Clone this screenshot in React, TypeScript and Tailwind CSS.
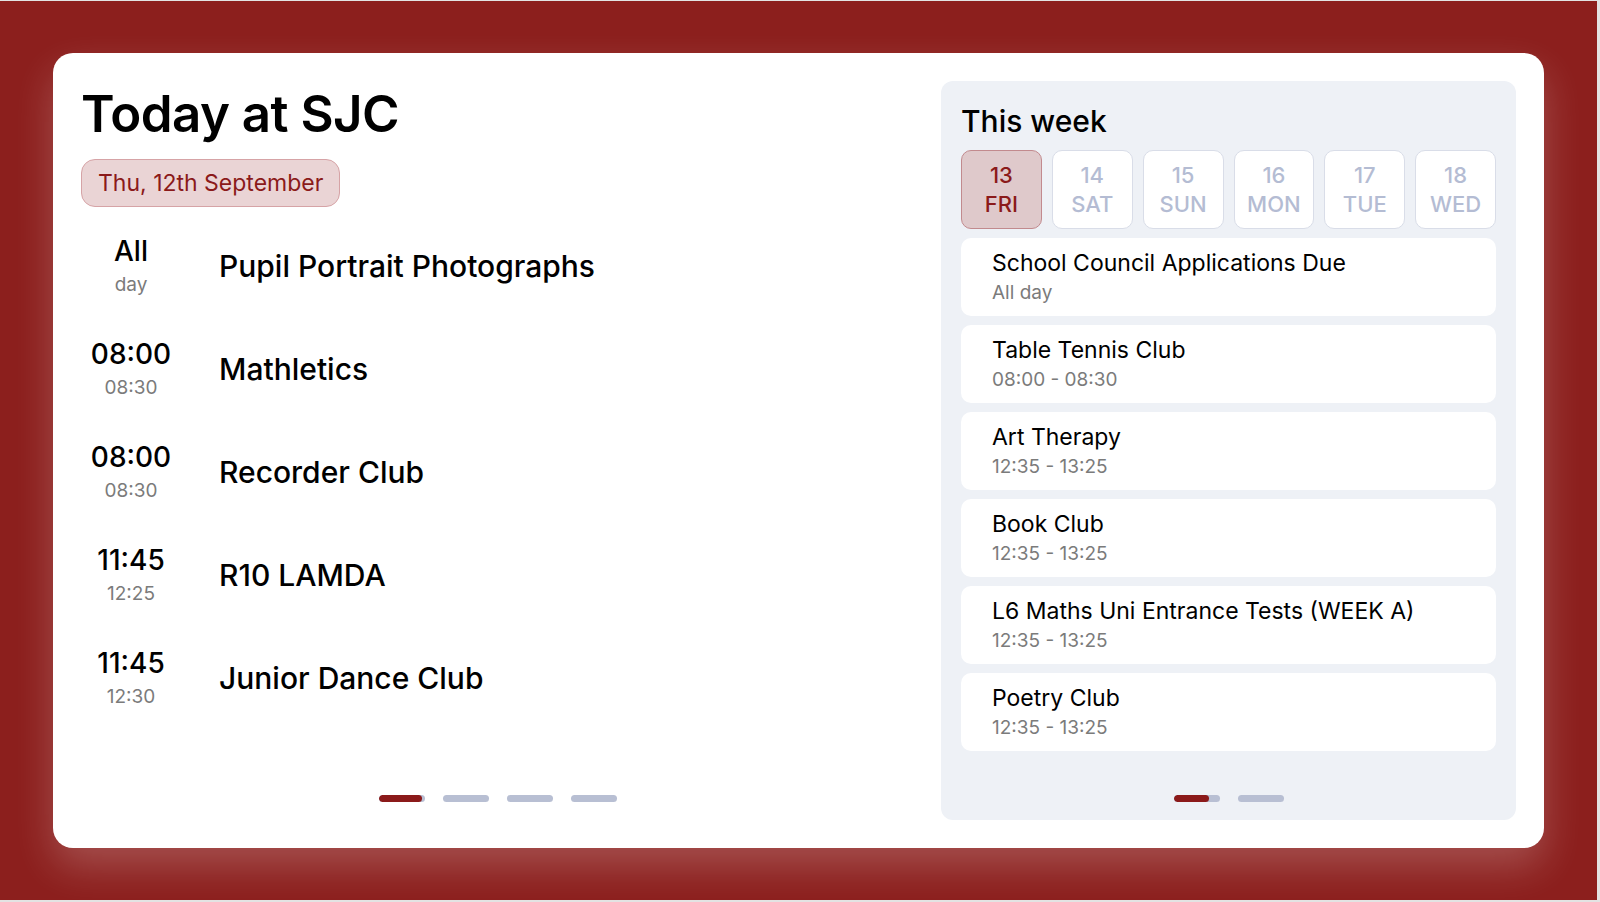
import React from "react";

const todayEvents = [
  { start: "All", end: "day", title: "Pupil Portrait Photographs" },
  { start: "08:00", end: "08:30", title: "Mathletics" },
  { start: "08:00", end: "08:30", title: "Recorder Club" },
  { start: "11:45", end: "12:25", title: "R10 LAMDA" },
  { start: "11:45", end: "12:30", title: "Junior Dance Club" },
];

const days = [
  { num: "13", name: "FRI", active: true },
  { num: "14", name: "SAT" },
  { num: "15", name: "SUN" },
  { num: "16", name: "MON" },
  { num: "17", name: "TUE" },
  { num: "18", name: "WED" },
];

const weekEvents = [
  { title: "School Council Applications Due", time: "All day" },
  { title: "Table Tennis Club", time: "08:00 - 08:30" },
  { title: "Art Therapy", time: "12:35 - 13:25" },
  { title: "Book Club", time: "12:35 - 13:25" },
  { title: "L6 Maths Uni Entrance Tests (WEEK A)", time: "12:35 - 13:25" },
  { title: "Poetry Club", time: "12:35 - 13:25" },
];

const Pager = ({ count, progress }: { count: number; progress: number }) => {
  return (
    <div className="mt-auto flex justify-center gap-[18px]">
      {Array.from({ length: count }).map((_, i) => (
        <div key={i} className="h-[7px] w-[46px] overflow-hidden rounded-full bg-[#b8bfd3]">
          {i === 0 && <div className="h-full rounded-full bg-[#8b1a1a]" style={{ width: `${progress}%` }}></div>}
        </div>
      ))}
    </div>
  );
};

const App = () => {
  return (
    <div className="h-[902px] w-[1600px] overflow-hidden bg-[#e3e3e3] font-['Inter','Noto_Sans',sans-serif]">
      <div className="mt-px h-[899px] w-[1597px] bg-[#8c1f1d] pl-[53px] pt-[52px]">
        <div className="flex h-[795px] w-[1491px] gap-[27px] rounded-[20px] bg-white p-7 shadow-[0_18px_40px_rgba(255,255,255,0.22)]">
          {/* today column */}
          <div className="flex flex-1 flex-col pb-[18px]">
            <h1 className="mt-[7px] text-[51px] font-semibold leading-[52px] tracking-[-0.01em] text-black">Today at SJC</h1>
            <div className="mt-[19px] self-start rounded-[14px] border border-[#d6a3a6] bg-[#ead4d5] px-4 py-[7px] text-[23px] leading-8 text-[#8b1a1a]">
              Thu, 12th September
            </div>
            <div className="mt-[26px] flex flex-col gap-[37px]">
              {todayEvents.map((ev, i) => (
                <div key={i} className="flex items-center gap-[38px]">
                  <div className="flex w-[100px] flex-col items-center">
                    <span className="text-[28px] font-medium leading-9 text-black">{ev.start}</span>
                    <span className="mt-[2px] text-[19px] leading-7 text-[#7b7b7b]">{ev.end}</span>
                  </div>
                  <div className="text-[30px] font-medium leading-9 text-black">{ev.title}</div>
                </div>
              ))}
            </div>
            <Pager count={4} progress={95} />
          </div>

          {/* week panel */}
          <div className="flex w-[575px] flex-col rounded-xl bg-[#eef1f6] px-5 pb-[18px] pt-[22px]">
            <h2 className="text-[30px] font-medium leading-9 text-black">This week</h2>
            <div className="mt-[11px] grid grid-cols-6 gap-[10px]">
              {days.map((d) => (
                <div
                  key={d.num}
                  className={
                    d.active
                      ? "flex h-[79px] flex-col items-center justify-center rounded-[10px] border border-[#c28a8e] bg-[#dfc9cb] text-[22px] font-medium leading-[29px] text-[#8b1a1a]"
                      : "flex h-[79px] flex-col items-center justify-center rounded-[10px] border border-[#d9dde8] bg-white text-[22px] font-medium leading-[29px] text-[#b4bcd3]"
                  }
                >
                  <span>{d.num}</span>
                  <span>{d.name}</span>
                </div>
              ))}
            </div>
            <div className="mt-[9px] flex flex-col gap-[9px]">
              {weekEvents.map((ev, i) => (
                <div key={i} className="h-[78px] rounded-[10px] bg-white px-[31px] pb-[8px] pt-[10px]">
                  <div className="text-[23px] leading-[30px] text-black">{ev.title}</div>
                  <div className="text-[19px] leading-[30px] text-[#7b7b7b]">{ev.time}</div>
                </div>
              ))}
            </div>
            <Pager count={2} progress={78} />
          </div>
        </div>
      </div>
    </div>
  );
};

export default App;
